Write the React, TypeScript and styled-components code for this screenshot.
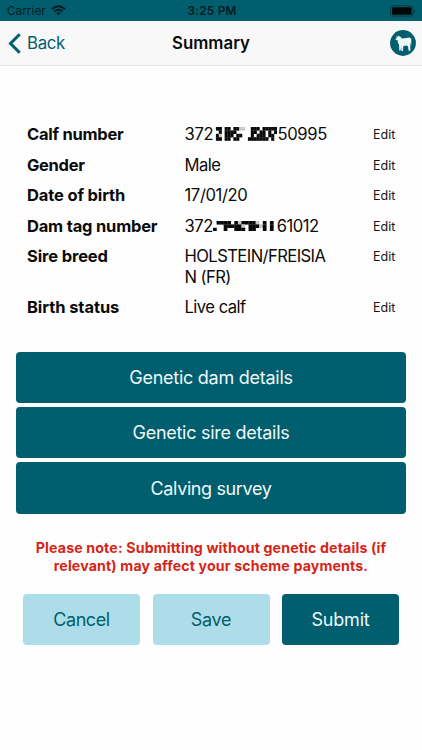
import React from "react";
import styled, { createGlobalStyle } from "styled-components";

const teal = "#005e6f";

const Global = createGlobalStyle`
  * { box-sizing: border-box; }
  html, body { margin: 0; background: #fff; }
  body { font-family: Inter, "Liberation Sans", sans-serif; color: #0a0a0a; }
  button { font-family: inherit; border: 0; padding: 0; margin: 0; }
`;

const Screen = styled.div`
  width: 422px;
  height: 750px;
  overflow: hidden;
  background: #fefefe;
  display: flex;
  flex-direction: column;
`;

const StatusBar = styled.header`
  height: 21px;
  flex: none;
  background: ${teal};
  display: grid;
  grid-template-columns: 1fr auto 1fr;
  align-items: center;
  padding: 0 6px 0 7px;
  line-height: 20px;
  color: #061a1f;
`;

const Carrier = styled.div`
  display: flex;
  align-items: center;
  gap: 5px;
  font-size: 11.6px;
  letter-spacing: 0.1px;
`;

const Clock = styled.div`
  padding-left: 1px;
  font-size: 11.8px;
  font-weight: 600;
  letter-spacing: 0.25px;
`;

const Battery = styled.svg`
  justify-self: end;
`;

const NavBar = styled.nav`
  height: 45px;
  flex: none;
  background: #f8f8f8;
  border-bottom: 1px solid #e4e4e4;
  display: grid;
  grid-template-columns: 1fr auto 1fr;
  align-items: center;
  padding: 0 6px 0 8px;
`;

const Back = styled.button`
  display: flex;
  align-items: center;
  gap: 6px;
  background: none;
  color: ${teal};
  font-size: 16.8px;
  letter-spacing: -0.3px;
`;

const Title = styled.h1`
  margin: 0;
  padding-right: 2px;
  font-size: 16.8px;
  font-weight: 600;
  letter-spacing: 0.03px;
`;

const Avatar = styled.svg`
  justify-self: end;
`;

const Details = styled.dl`
  margin: 58px 0 0;
  padding: 0 22px 0 27px;
  display: flex;
  flex-direction: column;
  gap: 10.2px;
`;

const Row = styled.div`
  display: grid;
  grid-template-columns: 157.5px 188.5px auto;
  line-height: 20.4px;
`;

const Label = styled.dt<{ $track: number }>`
  font-size: 16.5px;
  font-weight: 700;
  letter-spacing: ${(p) => p.$track}px;
`;

const Value = styled.dd<{ $track: number }>`
  margin: 0;
  font-size: 16.6px;
  letter-spacing: ${(p) => p.$track}px;
  display: flex;
  align-items: center;
  white-space: pre-line;
`;

const Edit = styled.button`
  background: none;
  text-align: left;
  align-self: start;
  padding-top: 1px;
  font-size: 12.5px;
  line-height: 19.4px;
  letter-spacing: 0;
  color: #151515;
`;

const Links = styled.section`
  margin: 33.9px 16px 0;
  display: flex;
  flex-direction: column;
  gap: 4px;
`;

const Button = styled.button<{ $light?: boolean; $track: number }>`
  height: 51.4px;
  border-radius: 4px;
  background: ${(p) => (p.$light ? "#addde9" : teal)};
  color: ${(p) => (p.$light ? teal : "#eff9fa")};
  font-size: 18px;
  letter-spacing: ${(p) => p.$track}px;
`;

const Notice = styled.p`
  margin: 25px 20px 0;
  text-align: center;
  color: #d52517;
  font-size: 14.2px;
  line-height: 18.4px;
  font-weight: 700;
  letter-spacing: 0.13px;
  white-space: pre-line;
`;

const Actions = styled.footer`
  margin: 18px 23px 0;
  display: grid;
  grid-template-columns: repeat(3, 117px);
  justify-content: space-between;
`;

const mosaics = {
  calf: [
    ".##.##.##oo..###.#####",
    "..#.####.....##.##.#.#",
    ".#o.###.##...#.###.##.",
    ".##.##.##...#######.#.",
  ],
  dam: [
    ".####.#o####o.#.#.",
    "...#####o.###o#.#.",
    "#..#..###.##..#.#.",
  ],
};

function Mosaic({ rows }: { rows: string[] }) {
  const columns = rows[0].length;
  const tone: Record<string, string> = { "#": "#090909", o: "#c9c9c9" };
  return (
    <svg
      width="64"
      height={rows.length * 3.4}
      viewBox={`0 0 ${columns} ${rows.length}`}
      preserveAspectRatio="none"
    >
      {rows.flatMap((row, y) =>
        [...row].map((c, x) =>
          tone[c] ? <rect key={`${x}-${y}`} x={x} y={y} width="1.06" height="1.06" fill={tone[c]} /> : null
        )
      )}
    </svg>
  );
}

const fields: { label: string; lt: number; value: React.ReactNode; vt: number }[] = [
  { label: "Calf number", lt: -0.25, value: <>372<Mosaic rows={mosaics.calf} />50995</>, vt: -0.3 },
  { label: "Gender", lt: -0.3, value: "Male", vt: -0.5 },
  { label: "Date of birth", lt: -0.14, value: "17/01/20", vt: -0.38 },
  { label: "Dam tag number", lt: -0.19, value: <>372<Mosaic rows={mosaics.dam} />61012</>, vt: -0.5 },
  { label: "Sire breed", lt: -0.13, value: "HOLSTEIN/FREISIA\nN (FR)", vt: -0.58 },
  { label: "Birth status", lt: -0.08, value: "Live calf", vt: -0.52 },
];

export default function App() {
  return (
    <>
      <Global />
      <Screen>
        <StatusBar>
          <Carrier>
            Carrier
            <svg width="15" height="11" viewBox="0 0 15 11" fill="none" stroke="#061a1f" strokeWidth="2">
              <path d="M1 4.1Q7.5-1.5 14 4.1M3.4 6.5Q7.5 3 11.6 6.5" />
              <path d="M5.2 8.1Q7.5 6.3 9.8 8.1L7.5 10.5Z" fill="#061a1f" stroke="none" />
            </svg>
          </Carrier>
          <Clock>3:25 PM</Clock>
          <Battery width="26" height="12" viewBox="0 0 26 12">
            <rect x=".5" y=".8" width="22.5" height="10.4" rx="2.6" fill="none" stroke="#033b46" />
            <rect x="2" y="2.2" width="19.5" height="7.6" rx="1.2" fill="#000708" />
            <path d="M24 4.2q1.4.5 1.4 1.8T24 7.8Z" fill="#033b46" />
          </Battery>
        </StatusBar>
        <NavBar>
          <Back>
            <svg width="13" height="21" viewBox="0 0 13 21" fill="none" stroke={teal} strokeWidth="3">
              <path d="M11.7 1.2 2.5 10.5l9.2 9.3" />
            </svg>
            Back
          </Back>
          <Title>Summary</Title>
          <Avatar width="26" height="26" viewBox="0 0 26 26">
            <circle cx="13" cy="13" r="12.9" fill={teal} />
            <path
              fill="#eef7f8"
              d="M6 6.3 7.8 6.7 8.6 5.4 9.8 6.7 11.3 6.9 11 8.1 12.5 8.5 19.5 7.6 21.2 8.4 21.4 13.5 20.8 17 20.5 12.2 20.1 13.8 20.4 20.8 18.6 20.8 18 16.5 16.7 15.5 13.3 15.9 13 20.9 11.5 20.9 11.2 16.5 10.6 20.4 9.3 20.4 9 14.7 7.8 12.7 7.7 10.3 5.7 10 5.5 9 6.9 7.9Z"
            />
          </Avatar>
        </NavBar>
        <Details>
          {fields.map((f) => (
            <Row key={f.label}>
              <Label $track={f.lt}>{f.label}</Label>
              <Value $track={f.vt}>{f.value}</Value>
              <Edit>Edit</Edit>
            </Row>
          ))}
        </Details>
        <Links>
          <Button $track={-0.26}>Genetic dam details</Button>
          <Button $track={-0.27}>Genetic sire details</Button>
          <Button $track={-0.38}>Calving survey</Button>
        </Links>
        <Notice>{"Please note: Submitting without genetic details (if\nrelevant) may affect your scheme payments."}</Notice>
        <Actions>
          <Button $light $track={-0.4}>Cancel</Button>
          <Button $light $track={-0.35}>Save</Button>
          <Button $track={-0.2}>Submit</Button>
        </Actions>
      </Screen>
    </>
  );
}
